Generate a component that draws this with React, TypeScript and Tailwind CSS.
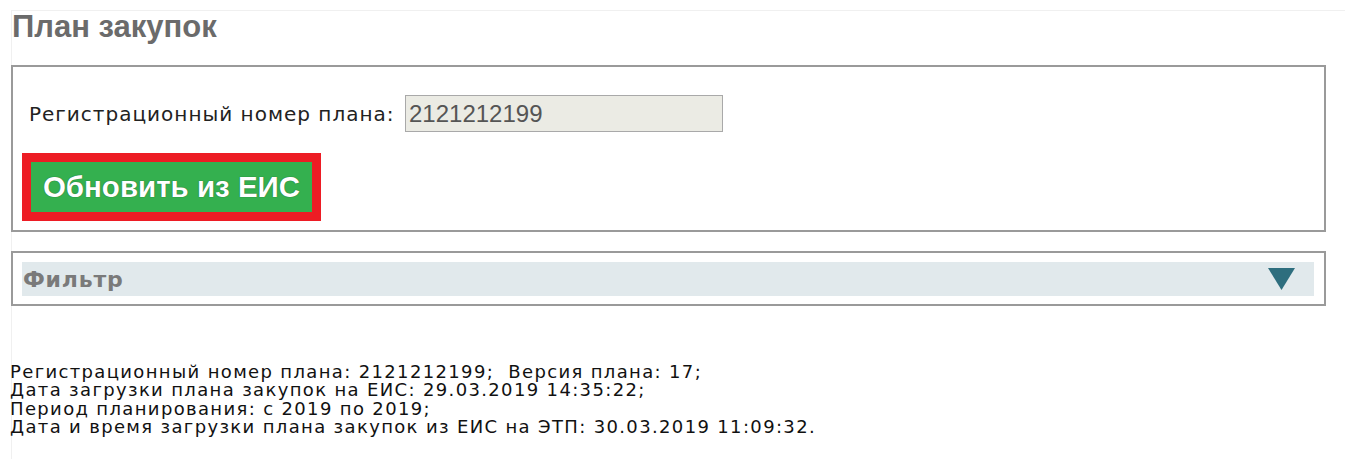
import React from 'react';

const verdana = "font-['DejaVu_Sans',Verdana,sans-serif]";
const arial = "font-['Liberation_Sans',Arial,sans-serif]";

const planInfo = [
  'Регистрационный номер плана: 2121212199;  Версия плана: 17;',
  'Дата загрузки плана закупок на ЕИС: 29.03.2019 14:35:22;',
  'Период планирования: с 2019 по 2019;',
  'Дата и время загрузки плана закупок из ЕИС на ЭТП: 30.03.2019 11:09:32.',
];

const App: React.FC = () => {
  return (
    <div className="w-[1345px] h-[459px] bg-white pt-[10px] pl-[11px] overflow-hidden">
      <div className="border-t border-l border-[#f0f0f0] h-full">
        {/* Page title */}
        <h1 className={`${arial} text-[31px] leading-[32px] font-bold text-[#6b6b6b]`}>План закупок</h1>

        {/* Registration number + refresh */}
        <section className="-ml-px mt-[22px] w-[1315px] h-[167px] border-2 border-[#9a9a9a] pt-[28px] pl-[9px]">
          <div className="flex items-center">
            <label className={`${verdana} ml-[7px] w-[376px] shrink-0 text-[20px] tracking-[1px] text-[#222]`}>
              Регистрационный номер плана:
            </label>
            <input
              readOnly
              value="2121212199"
              className={`${arial} w-[318px] h-[37px] border border-[#a9a9a9] bg-[#ebebe4] pl-[3px] text-[24px] text-[#555] outline-none`}
            />
          </div>
          <div className="mt-[21px] w-[299px] h-[68px] border-[9px] border-[#ed1c24]">
            <button
              className={`${arial} w-full h-full bg-[#34b04f] text-[29.5px] font-bold text-white [text-shadow:0_0_1px_rgba(0,0,0,0.6)]`}
            >
              Обновить из ЕИС
            </button>
          </div>
        </section>

        {/* Collapsible filter header */}
        <section className="-ml-px mt-[19px] w-[1315px] h-[55px] border-2 border-[#9a9a9a] pt-[9px] pl-[9px] pr-[10px]">
          <div className="h-[34px] bg-[#e1e9ec] flex items-center justify-between pl-px pr-[19px]">
            <span className={`${verdana} text-[22px] tracking-[0.8px] font-bold text-[#7a7a7a]`}>Фильтр</span>
            <svg width="27" height="22" viewBox="0 0 27 22">
              <polygon points="0,0 27,0 13.5,22" fill="#2e6e7e" />
            </svg>
          </div>
        </section>

        {/* Plan summary */}
        <div className={`${verdana} -ml-[2px] mt-[57px] text-[18px] leading-[18.3px] tracking-[1.35px] text-[#111] whitespace-pre`}>
          {planInfo.map((line) => (
            <div key={line}>{line}</div>
          ))}
        </div>
      </div>
    </div>
  );
};

export default App;
